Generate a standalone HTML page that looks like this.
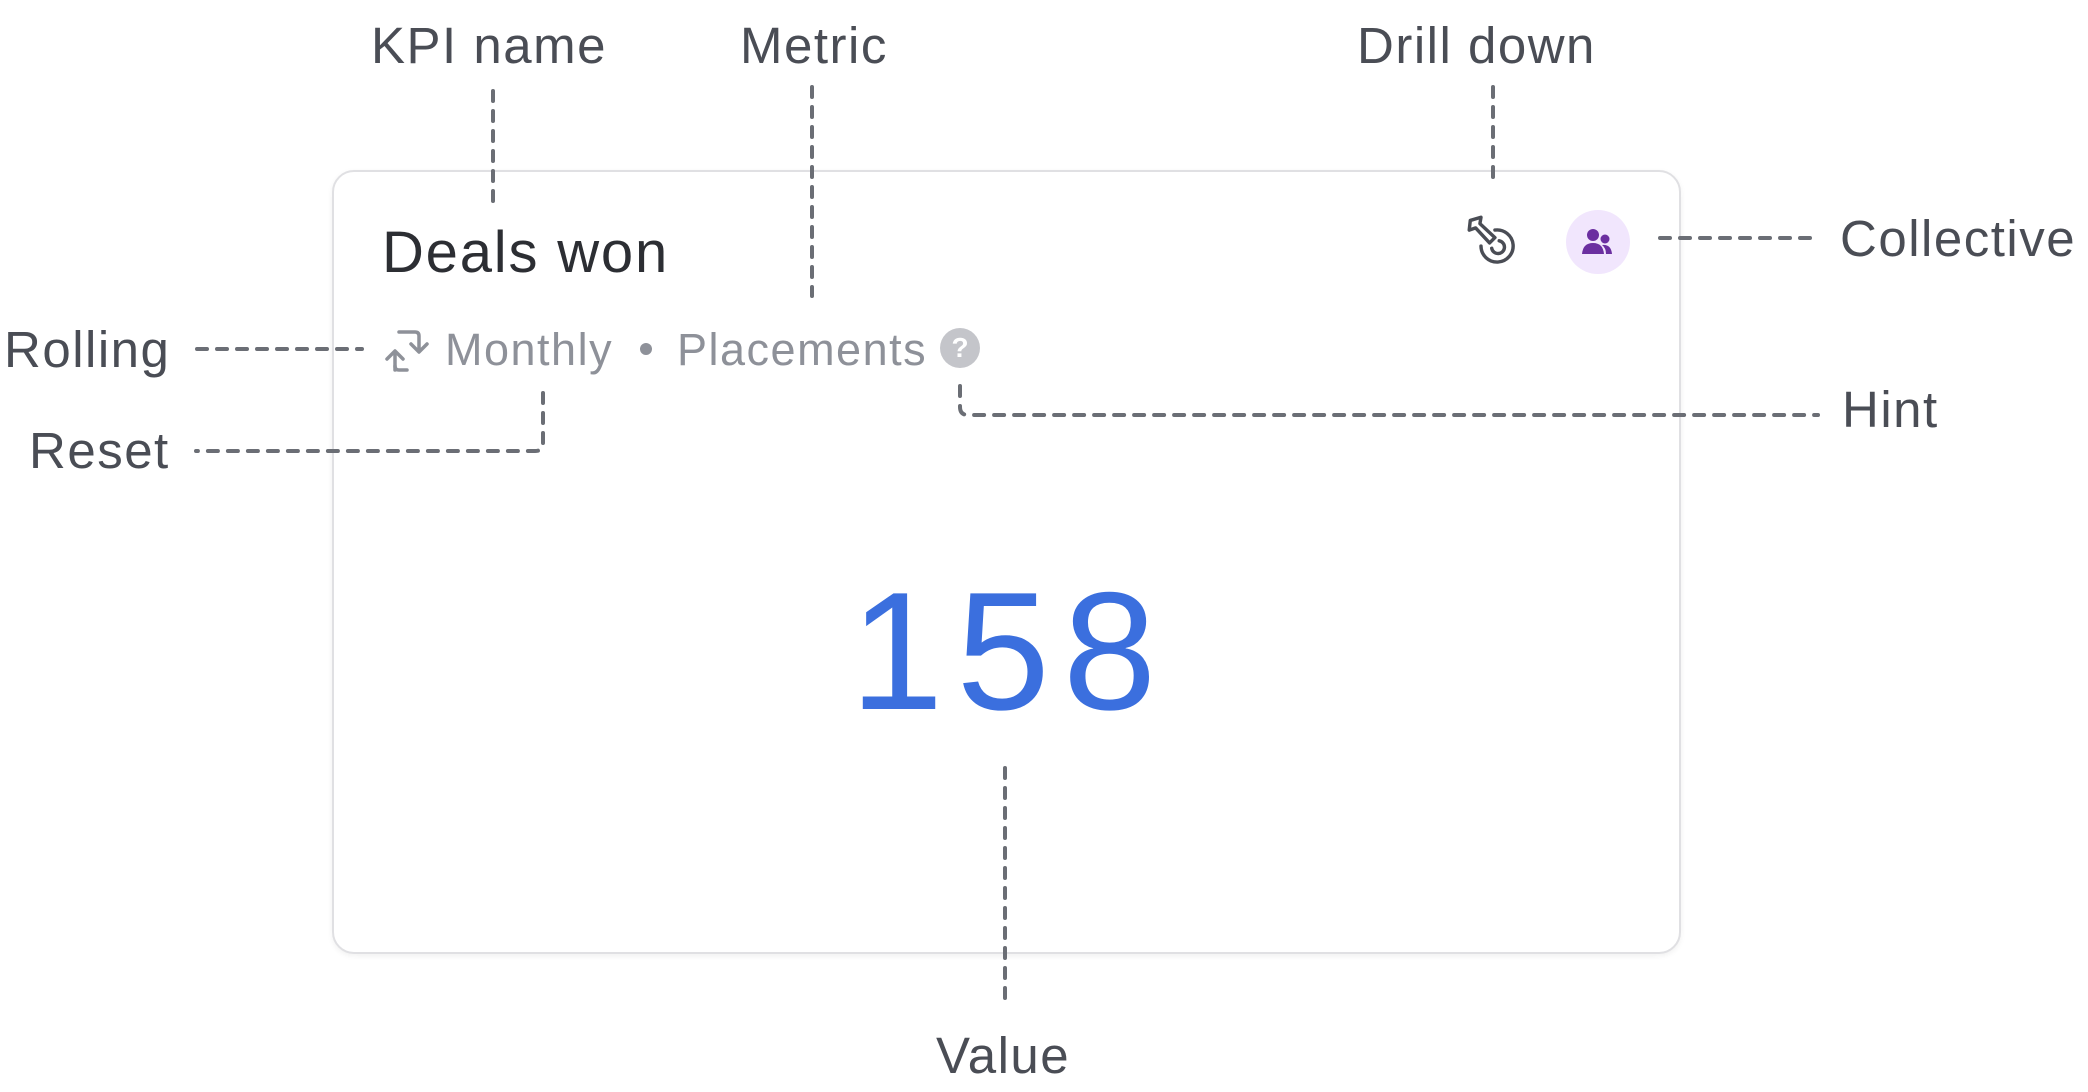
<!DOCTYPE html>
<html><head><meta charset="utf-8"><style>
html,body{margin:0;padding:0;background:#fff;width:2088px;height:1092px;overflow:hidden;position:relative;font-family:"Liberation Sans",sans-serif}
.lbl{position:absolute;font-size:51px;color:#4a4d55;line-height:1;white-space:nowrap;letter-spacing:1.5px}
.card{position:absolute;left:332px;top:170px;width:1345px;height:780px;border:2px solid #e0e0e3;border-radius:22px;box-shadow:0 2px 6px rgba(0,0,0,.06);background:#fff}
.t{position:absolute;font-size:58px;color:#2c2e33;left:382px;top:224px;line-height:1;white-space:nowrap;letter-spacing:1.8px}
.sub{position:absolute;font-size:45px;color:#8e9199;line-height:1;top:327px;white-space:nowrap;letter-spacing:1.5px}
.val{position:absolute;left:850px;top:567px;font-size:168px;color:#3b6fde;line-height:1;letter-spacing:13px}
svg.d{position:absolute;left:0;top:0}
</style></head><body>
<div class="card"></div>
<div class="t">Deals won</div>
<svg style="position:absolute;left:381px;top:326px" width="48" height="46" viewBox="0 0 48 46" fill="none" stroke="#8e9199" stroke-width="3.5" stroke-linecap="round" stroke-linejoin="round">
<path d="M14 44 V26 M6 33 L14 25 L22 33"/><path d="M14 40 Q14 44 18 44 H26"/><path d="M18 6 H34 Q38 6 38 10 V24 M30 18 L38 26 L46 18"/>
</svg>
<div class="sub" style="left:445px">Monthly</div>
<div style="position:absolute;left:640px;top:343px;width:12px;height:12px;border-radius:50%;background:#8e9199"></div>
<div class="sub" style="left:677px">Placements</div>
<div style="position:absolute;left:940px;top:328px;width:40px;height:40px;border-radius:50%;background:#c4c5ca;color:#fff;font-size:28px;font-weight:bold;text-align:center;line-height:40px">?</div>
<svg style="position:absolute;left:1466px;top:214px" width="60" height="60" viewBox="0 0 56 56" fill="none" stroke="#4a4d55" stroke-width="3.2" stroke-linecap="round" stroke-linejoin="round">
<path d="M4 6 L14 3 L13 9 L27 22 L22 27 L9 13 L3 15 Z"/>
<path d="M27 15 A15 15 0 1 1 14 30"/><path d="M31 25 A6 6 0 1 1 24 32"/>
</svg>
<div style="position:absolute;left:1566px;top:210px;width:64px;height:64px;border-radius:50%;background:#f1e6fd"></div>
<svg style="position:absolute;left:1580px;top:224px" width="36" height="36" viewBox="0 0 36 36" fill="#6b2fa0">
<circle cx="13" cy="11" r="6"/><path d="M2 30 Q3 19 13 19 Q23 19 24 30 Z"/><circle cx="25" cy="15" r="4.5"/><path d="M22 21 Q31 20 32 30 H26 Q26 24 22 21Z"/>
</svg>
<div class="val">158</div>
<svg class="d" width="2088" height="1092" fill="none" stroke="#6b6e75" stroke-width="4" stroke-linecap="round" stroke-dasharray="10 10">
<path d="M493 91 V210"/><path d="M812 87 V296"/><path d="M1493 87 V177"/>
<path d="M1660 238 H1818"/><path d="M197 349 H362"/>
<path d="M543 393 V443 Q543 451 535 451 H196"/>
<path d="M960 386 V407 Q960 415 968 415 H1818"/>
<path d="M1005 768 V1001"/>
</svg>
<div class="lbl" style="left:371px;top:20px">KPI name</div>
<div class="lbl" style="left:740px;top:20px">Metric</div>
<div class="lbl" style="left:1357px;top:20px">Drill down</div>
<div class="lbl" style="left:1840px;top:213px">Collective</div>
<div class="lbl" style="left:4px;top:324px">Rolling</div>
<div class="lbl" style="left:29px;top:425px">Reset</div>
<div class="lbl" style="left:1842px;top:384px">Hint</div>
<div class="lbl" style="left:936px;top:1030px">Value</div>
</body></html>
